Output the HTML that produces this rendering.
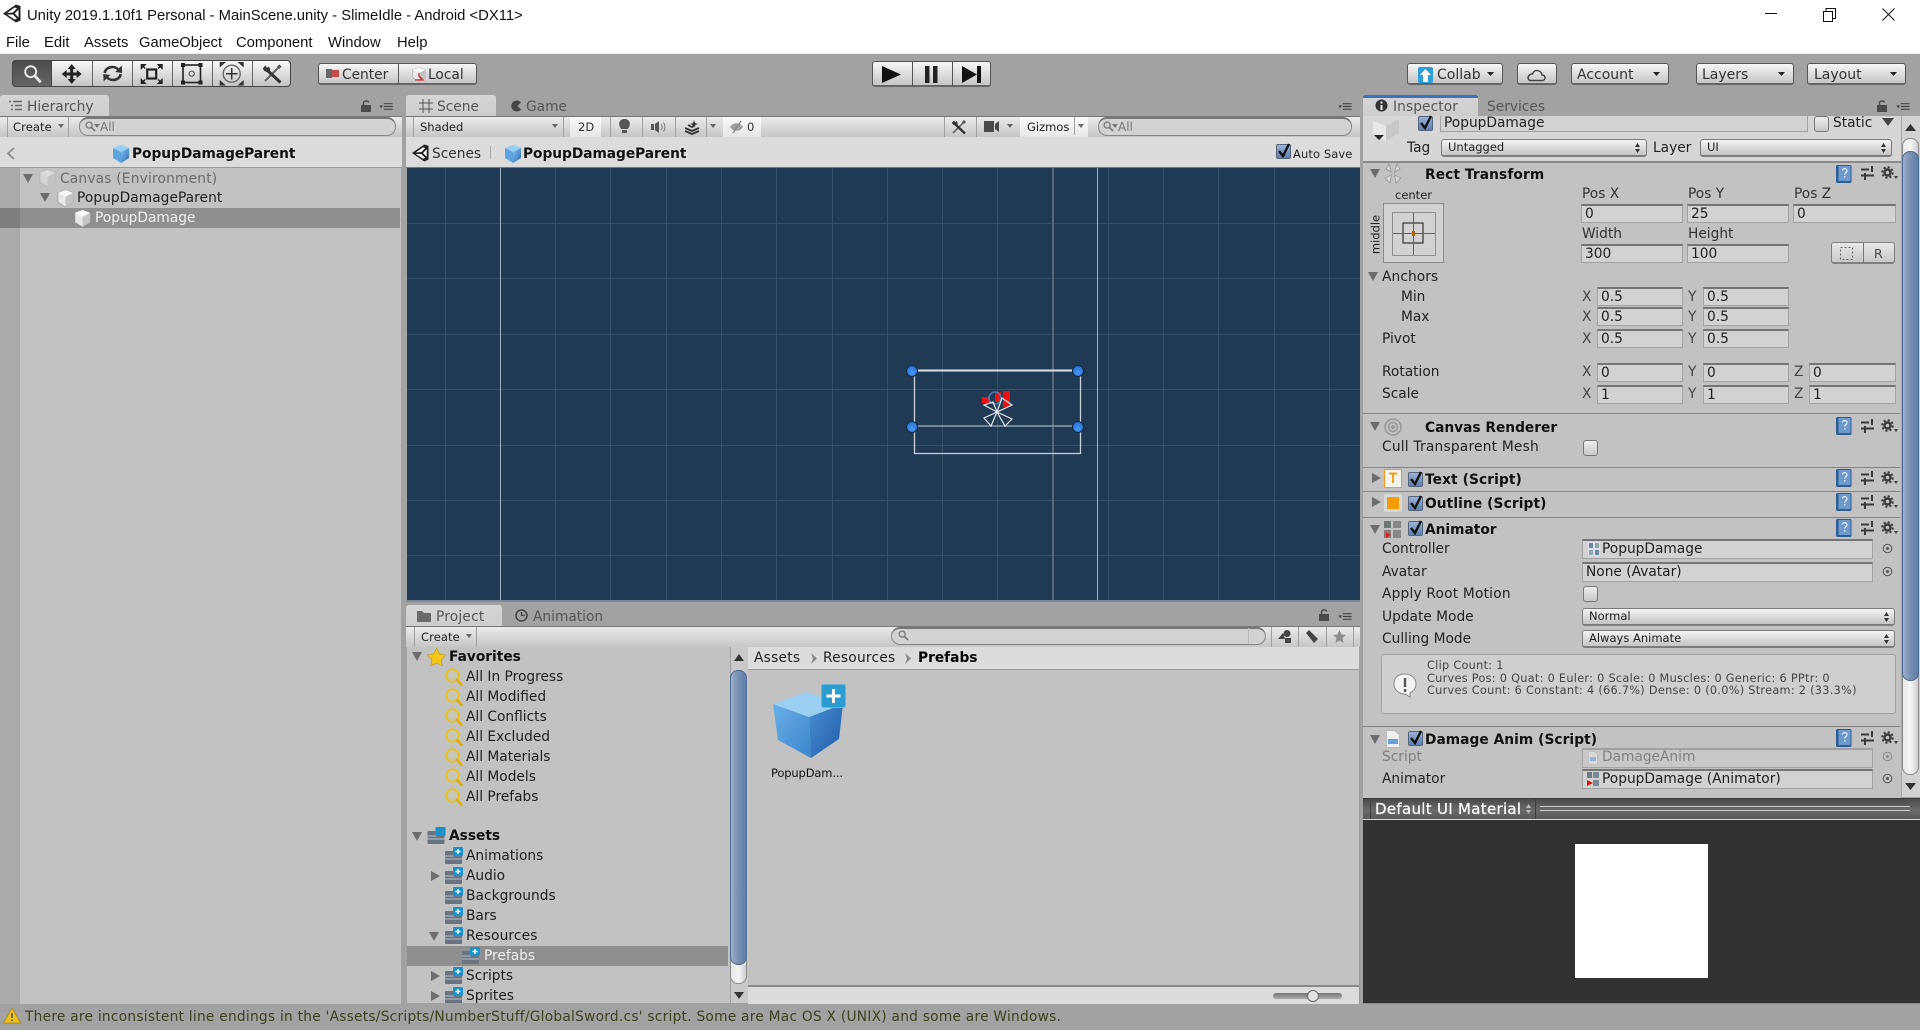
<!DOCTYPE html>
<html><head><meta charset="utf-8"><title>Unity</title>
<style>
html,body{margin:0;padding:0;width:1920px;height:1030px;overflow:hidden;background:#a2a2a2}
#r{position:relative;width:1920px;height:1030px;overflow:hidden;font:13.75px "DejaVu Sans",sans-serif;color:#1e1e1e}
#r div,#r span,#r svg{position:absolute}
.t{white-space:nowrap;height:20px;line-height:20px;padding-top:1px}
.b{font-weight:bold;color:#111}
.s{font-size:11.5px}
.g{color:#555}
.w{font-family:"Liberation Sans",sans-serif;font-size:14.8px;color:#111}
.bar{background:linear-gradient(#ebebeb,#c6c6c6);border-top:1px solid #777;box-sizing:border-box}
.crumb{background:#dcdcdc;border-bottom:1px solid #9a9a9a;box-sizing:border-box}
.list{background:#c2c2c2}
.sep{width:1px;background:#a0a0a0}
.f{box-sizing:border-box;background:#d2d2d2;border:1px solid #a2a2a2;border-top:2px solid #757575;padding-left:3px;line-height:17px;white-space:nowrap;overflow:hidden}
.dd{box-sizing:border-box;background:linear-gradient(#f4f4f4,#c4c4c4);border:1px solid #7c7c7c;border-bottom:2px solid #7c7c7c;border-radius:3px;font-size:11.5px;line-height:14px;padding-left:6px;white-space:nowrap}
.btn{box-sizing:border-box;background:linear-gradient(#f6f6f6,#c6c6c6);border:1px solid #555;border-bottom:2px solid #666;border-radius:3px;line-height:18px;white-space:nowrap;color:#222}
.ln{height:1px;background:#828282;left:1363px;width:537px}
.thumb{box-sizing:border-box;background:linear-gradient(90deg,#9db0ca,#7c93b4 40%,#5f7ea8);border:1px solid #4d6b94;border-radius:8px}
.tail{box-sizing:border-box;background:linear-gradient(90deg,#e8e8e8,#f6f6f6,#cfcfcf);border:1px solid #8a8a8a;border-radius:8px}
.cb{box-sizing:border-box;background:linear-gradient(#eee,#c8c8c8);border:1px solid #777;border-radius:3px;width:15px;height:16px}
.ck{box-sizing:border-box;width:15px;height:15px;background:linear-gradient(#9bb3d4,#5e7fb0);border:1px solid #54657e;border-radius:2px}
</style></head><body><div id="r">
<svg width="0" height="0" style="left:0;top:0">
<defs>
<symbol id="un" viewBox="0 0 18 19"><path d="M0 9.500 13 .5 17.500 2V16.500L13 18.500Z" fill="#222"/><path d="M4 9 11.500 3.500 14 4.200 10 8.500ZM4 10.500H10L14 14.800 11.500 15.500ZM15.500 5.500V13.500L11.700 9.500Z" fill="#fff"/></symbol>
<symbol id="td" viewBox="0 0 10 10"><path d="M0 1H10L5 10Z" fill="#6d6d6d"/></symbol>
<symbol id="tr" viewBox="0 0 10 10"><path d="M1 0V10L10 5Z" fill="#6d6d6d"/></symbol>
<symbol id="cw" viewBox="0 0 18 20"><path d="M9 1 17 4V14L9 19 1 14V4Z" fill="#e8e8e8" stroke="#9a9a9a" stroke-width=".7"/><path d="M9 8V19L17 14V4Z" fill="#c4c4c4"/><path d="M1 4 9 8 17 4 9 1Z" fill="#f8f8f8"/></symbol>
<linearGradient id="bl" x1="0" y1="0" x2="1" y2="1"><stop offset="0" stop-color="#84c0ee"/><stop offset="1" stop-color="#2f6cb4"/></linearGradient>
<symbol id="cb" viewBox="0 0 18 20"><path d="M9 1 17 4V14L9 19 1 14V4Z" fill="#5fa4e0"/><path d="M9 8V19L17 14V4Z" fill="url(#bl)"/><path d="M1 4 9 8 17 4 9 1Z" fill="#9ad0f4"/></symbol>
<symbol id="mg" viewBox="0 0 18 19"><circle cx="7.500" cy="7.500" r="6.200" fill="#d4cfa8" fill-opacity=".35" stroke="#e8c21a" stroke-width="1.800"/><path d="M12 12 16.500 17" stroke="#dcb010" stroke-width="2.600" stroke-linecap="round"/></symbol>
<symbol id="fo" viewBox="0 0 18 18"><rect x="0" y="4" width="17" height="13" rx="1" fill="#6a7480"/><path d="M0 9H9M0 12H17" stroke="#b8c0c8" stroke-width="1"/><rect x="8" y="0" width="10" height="9" rx="1" fill="#1e90c8"/><path d="M13 2V7M10.500 4.500H15.500" stroke="#fff" stroke-width="1.400"/></symbol>
<symbol id="hp" viewBox="0 0 16 18"><rect x="0" y="0" width="15.500" height="18" rx="1.500" fill="#2f5e94"/><rect x="2.500" y="1" width="12" height="15" fill="#6d9acb"/><path d="M6.500 5.500C6.500 3 11 3 11 5.700 11 7.600 8.800 7.600 8.800 9.600M8.800 11V12.600" fill="none" stroke="#e8f0fa" stroke-width="1.200"/></symbol>
<symbol id="sl" viewBox="0 0 13 14"><path d="M0 3.500H8M0 9.500H13M11 0V6M4 7V14" stroke="#3a3a3a" stroke-width="2" fill="none"/></symbol>
<symbol id="ge" viewBox="0 0 17 14"><circle cx="6.500" cy="6.500" r="3" fill="none" stroke="#3a3a3a" stroke-width="2.400"/><circle cx="6.500" cy="6.500" r="5.300" fill="none" stroke="#3a3a3a" stroke-width="2" stroke-dasharray="2.100 2.060"/><path d="M13 10H17L15 13Z" fill="#3a3a3a"/></symbol>
<symbol id="rk" viewBox="0 0 12 8"><path d="M4 1.500H12M4 4H12M4 6.500H12" stroke="#444" stroke-width="1.100"/><path d="M0 3H3.400L1.700 5.500Z" fill="#444"/></symbol>
<symbol id="lk" viewBox="0 0 10 12"><rect y="5" width="10" height="7" fill="#4a4a4a"/><path d="M2.500 5V2.500C2.500 .5 7.500 .5 7.500 2.500" fill="none" stroke="#4a4a4a" stroke-width="1.400"/></symbol>
<symbol id="sr" viewBox="0 0 12 12"><circle cx="4.500" cy="4.500" r="3.300" fill="none" stroke="#777" stroke-width="1.400"/><path d="M7 7 11 11" stroke="#777" stroke-width="1.800"/></symbol>
<symbol id="dt" viewBox="0 0 11 11"><circle cx="5.500" cy="5.500" r="4.300" fill="none" stroke="#555" stroke-width="1"/><circle cx="5.500" cy="5.500" r="1.500" fill="#555"/></symbol>
<symbol id="ud" viewBox="0 0 5 10"><path d="M2.500 0 5 4H0ZM2.500 10 5 6H0Z" fill="#333"/></symbol>
</defs></svg>

<!-- title -->
<div style="left:0;top:0;width:1920px;height:53px;background:#fff"></div>
<div style="left:0;top:53px;width:1920px;height:1px;background:#f0f0f0"></div>
<svg style="left:3px;top:4px" width="18" height="19"><use href="#un"/></svg>
<div class="t w" style="left:27px;top:5px">Unity 2019.1.10f1 Personal - MainScene.unity - SlimeIdle - Android &lt;DX11&gt;</div>
<div class="t w" style="left:6px;top:32px">File</div>
<div class="t w" style="left:44px;top:32px">Edit</div>
<div class="t w" style="left:84px;top:32px">Assets</div>
<div class="t w" style="left:139px;top:32px">GameObject</div>
<div class="t w" style="left:236px;top:32px">Component</div>
<div class="t w" style="left:328px;top:32px">Window</div>
<div class="t w" style="left:397px;top:32px">Help</div>
<svg style="left:1760px;top:4px" width="140" height="20"><path d="M5 9.500H17" stroke="#111"/><path d="M63.500 7.500H72.500V17.500H63.500ZM66 7.500V4.500H75.500V14.500H72.500" fill="none" stroke="#111"/><path d="M122.500 4.500 134.500 16.500M134.500 4.500 122.500 16.500" stroke="#111"/></svg>

<!-- tools -->
<div style="left:12px;top:60px;width:279px;height:27px;box-sizing:border-box;background:linear-gradient(#f8f8f8,#c4c4c4);border:1px solid #444;border-radius:4px"></div>
<div style="left:12px;top:60px;width:40px;height:27px;box-sizing:border-box;background:linear-gradient(#4c4c4c,#656565);border:1px solid #444;border-radius:4px 0 0 4px"></div>
<div class="sep" style="left:92px;top:61px;height:25px;background:#666"></div><div class="sep" style="left:132px;top:61px;height:25px;background:#666"></div><div class="sep" style="left:172px;top:61px;height:25px;background:#666"></div><div class="sep" style="left:212px;top:61px;height:25px;background:#666"></div><div class="sep" style="left:252px;top:61px;height:25px;background:#666"></div>
<svg style="left:12px;top:60px" width="279" height="27" viewBox="0 0 279 27">
<circle cx="18.700" cy="11.700" r="5.500" fill="none" stroke="#e6e6e6" stroke-width="2"/><path d="M22.700 15.700 28.700 22.300" stroke="#e6e6e6" stroke-width="2.800"/>
<path transform="translate(59.700 14)" d="M0 -10 4 -5H1.500V-1.500H5V-4L10 0 5 4V1.500H1.500V5H4L0 10-4 5H-1.500V1.500H-5V4L-10 0-5 -4V-1.500H-1.500V-5H-4Z" fill="#222"/>
<g transform="translate(100.700 13.500)" fill="#333"><path d="M-8 -.5C-7 -7 2 -8.500 6 -3.500" fill="none" stroke="#333" stroke-width="2.600"/><path d="M9 -8 9.500 -.5 2.500 -1.500Z"/><g transform="rotate(180)"><path d="M-8 -.5C-7 -7 2 -8.500 6 -3.500" fill="none" stroke="#333" stroke-width="2.600"/><path d="M9 -8 9.500 -.5 2.500 -1.500Z"/></g></g>
<g transform="translate(139.700 14)" fill="#222"><rect x="-4.500" y="-4.500" width="9" height="9" fill="none" stroke="#222" stroke-width="2.200"/><path d="M-11 -10H-5L-11 -4ZM11 -10H5L11 -4ZM-11 10H-5L-11 4ZM11 10H5L11 4Z"/><path d="M-9 -8-6.500 -5.500M9 -8 6.500 -5.500M-9 8-6.500 5.500M9 8 6.500 5.500" stroke="#222" stroke-width="1.300"/></g>
<rect x="171" y="5" width="17.500" height="17.500" fill="none" stroke="#222" stroke-width="1.600"/><circle cx="179.700" cy="13.700" r="2.600" fill="none" stroke="#444"/><rect x="169" y="3" width="4" height="4" fill="#222"/><rect x="186.500" y="3" width="4" height="4" fill="#222"/><rect x="169" y="20.500" width="4" height="4" fill="#222"/><rect x="186.500" y="20.500" width="4" height="4" fill="#222"/>
<circle cx="219.700" cy="13.700" r="8.500" fill="none" stroke="#666" stroke-width="1.400"/><path d="M219.700 8V19.500M214 13.700H225.500" stroke="#333" stroke-width="1.500"/><path d="M207.700 2H214L207.700 7.500ZM231.700 2H225.500L231.700 7.500ZM207.700 25.500H214L207.700 20ZM231.700 25.500H225.500L231.700 20Z" fill="#333"/>
<path d="M253 21 266 8" stroke="#666" stroke-width="2"/><path d="M266 8 268.500 5.500" stroke="#555" stroke-width="3.200"/><path d="M255.500 10.500 268.500 22.500" stroke="#333" stroke-width="3"/><path d="M251 8 253.500 5.500 255 8 256.500 6.500C258.500 8 258.500 11 256.500 12.500L253.500 11.500C252 11 251 9.500 251 8Z" fill="#333"/>
</svg>

<div class="btn" style="left:318px;top:63px;width:159px;height:22px"></div>
<div class="sep" style="left:398px;top:64px;height:20px;background:#555"></div>
<svg style="left:326px;top:69px" width="14" height="9"><rect width="6" height="9" fill="#666"/><rect x="6" y="1" width="7" height="7" fill="#c24a4a"/></svg>
<div class="t" style="left:342px;top:64px;color:#333">Center</div>
<svg style="left:412px;top:66px" width="14" height="17" viewBox="0 0 18 20"><use href="#cw" width="18" height="20"/><path d="M4 17H14L9 12V8" stroke="#c33" stroke-width="1.800" fill="none"/></svg>
<div class="t" style="left:428px;top:64px;color:#333">Local</div>

<!-- play -->
<div class="btn" style="left:872px;top:61px;width:119px;height:26px"></div>
<div class="sep" style="left:912px;top:62px;height:24px;background:#555"></div><div class="sep" style="left:952px;top:62px;height:24px;background:#555"></div>
<svg style="left:872px;top:61px" width="119" height="26"><path d="M10 5 29 13.500 10 22Z" fill="#111"/><rect x="53" y="5" width="4.500" height="17" fill="#222"/><rect x="61" y="5" width="4.500" height="17" fill="#222"/><path d="M90 5 105 13.500 90 22Z" fill="#111"/><rect x="105" y="5" width="4" height="17" fill="#111"/></svg>

<!-- right toolbar -->
<div class="btn" style="left:1407px;top:63px;width:96px;height:22px"></div>
<svg style="left:1418px;top:67px" width="15" height="16"><rect width="15" height="16" rx="2" fill="#2c9fd8"/><path d="M7.500 2 13 8H10V15H5V8H2Z" fill="#fff"/></svg>
<div class="t" style="left:1437px;top:64px;font-size:14px;color:#333">Collab</div>
<svg style="left:1487px;top:72px" width="8" height="5"><path d="M0 0H7L3.500 4Z" fill="#222"/></svg>
<div class="btn" style="left:1517px;top:63px;width:40px;height:22px"></div>
<svg style="left:1526px;top:68px" width="21" height="14"><path d="M5 12.500H16C20 12.500 20 7 16 7 15 1.500 8 1 6.500 6 2 5.500 0 12.500 5 12.500Z" fill="none" stroke="#444" stroke-width="1.500"/></svg>
<div class="btn" style="left:1571px;top:63px;width:98px;height:22px"></div>
<div class="t" style="left:1577px;top:64px;font-size:14px;color:#333">Account</div>
<svg style="left:1653px;top:72px" width="8" height="5"><path d="M0 0H7L3.500 4Z" fill="#222"/></svg>
<div class="btn" style="left:1696px;top:63px;width:98px;height:22px"></div>
<div class="t" style="left:1702px;top:64px;font-size:14px;color:#333">Layers</div>
<svg style="left:1778px;top:72px" width="8" height="5"><path d="M0 0H7L3.500 4Z" fill="#222"/></svg>
<div class="btn" style="left:1807px;top:63px;width:99px;height:22px"></div>
<div class="t" style="left:1814px;top:64px;font-size:14px;color:#333">Layout</div>
<svg style="left:1890px;top:72px" width="8" height="5"><path d="M0 0H7L3.500 4Z" fill="#222"/></svg>

<!-- HIERARCHY -->
<div style="left:0;top:95px;width:109px;height:21px;background:linear-gradient(#d6d6d6,#cdcdcd);border-radius:3px 3px 0 0"></div>
<svg style="left:9px;top:100px" width="14" height="11"><path d="M0 1.500H2M4 1.500H13M2 5.500H4M6 5.500H13M2 9.500H4M6 9.500H13" stroke="#666" stroke-width="1.500"/></svg>
<div class="t g" style="left:27px;top:96px">Hierarchy</div>
<svg style="left:361px;top:100px" width="10" height="12"><use href="#lk"/></svg>
<svg style="left:377px;top:102px" width="18" height="9" viewBox="0 0 12 8"><use href="#rk" width="12" height="8"/></svg>
<div class="bar" style="left:0;top:116px;width:402px;height:21px"></div>
<div class="sep" style="left:7px;top:117px;height:20px"></div><div class="sep" style="left:68px;top:117px;height:20px"></div>
<div class="t s" style="left:13px;top:116px;color:#222;letter-spacing:.1px">Create</div>
<svg style="left:58px;top:124px" width="7" height="5"><path d="M0 0H6L3 4Z" fill="#666"/></svg>
<div style="left:79px;top:117px;width:317px;height:19px;box-sizing:border-box;background:#d2d2d2;border:1px solid #868686;border-top:2px solid #777;border-radius:9px"></div>
<svg style="left:85px;top:121px" width="11" height="11"><use href="#sr"/></svg>
<svg style="left:94px;top:124px" width="6" height="4"><path d="M0 0H6L3 4Z" fill="#777"/></svg>
<div class="t s g" style="left:100px;top:116px;font-size:12px;color:#777">All</div>
<div class="crumb" style="left:0;top:137px;width:402px;height:31px"></div>
<svg style="left:6px;top:147px" width="9" height="13"><path d="M8 1 2 6.500 8 12" fill="none" stroke="#8a8a8a" stroke-width="1.800"/></svg>
<svg style="left:112px;top:144px" width="18" height="20"><use href="#cb"/></svg>
<div class="t b" style="left:132px;top:143px;letter-spacing:-.03px">PopupDamageParent</div>
<div class="list" style="left:0;top:168px;width:401px;height:836px"></div>
<div style="left:0;top:168px;width:20px;height:836px;background:#ababab"></div>
<div style="left:0;top:208px;width:400px;height:20px;background:#8f8f8f"></div>
<div style="left:0;top:208px;width:20px;height:20px;background:#7e7e7e"></div>
<svg style="left:23px;top:173px" width="10" height="10"><use href="#td"/></svg>
<svg style="left:39px;top:169px;opacity:.5" width="17" height="19"><use href="#cw"/></svg>
<div class="t" style="left:60px;top:168px;color:#6a6a6a;letter-spacing:.2px">Canvas (Environment)</div>
<svg style="left:40px;top:192px" width="10" height="10"><use href="#td"/></svg>
<svg style="left:57px;top:189px" width="17" height="19"><use href="#cw"/></svg>
<div class="t" style="left:77px;top:187px;letter-spacing:.05px">PopupDamageParent</div>
<svg style="left:74px;top:209px" width="17" height="19"><use href="#cw"/></svg>
<div class="t" style="left:95px;top:207px;color:#f0f0f0">PopupDamage</div>

<!-- SCENE -->
<div style="left:406px;top:95px;width:90px;height:21px;background:linear-gradient(#d6d6d6,#cdcdcd);border-radius:3px 3px 0 0"></div>
<svg style="left:419px;top:99px" width="14" height="14"><path d="M4 0V14M10 0V14M0 4H14M0 10H14" stroke="#555"/></svg>
<div class="t g" style="left:437px;top:96px">Scene</div>
<svg style="left:510px;top:100px" width="12" height="12"><path d="M11 2.500A5.500 5.500 0 1 0 11 9.500L7.500 6Z" fill="#444"/></svg>
<div class="t g" style="left:526px;top:96px">Game</div>
<svg style="left:1336px;top:102px" width="18" height="9" viewBox="0 0 12 8"><use href="#rk" width="12" height="8"/></svg>
<div class="bar" style="left:406px;top:116px;width:954px;height:21px"></div>
<div class="sep" style="left:413px;top:117px;height:20px"></div><div class="sep" style="left:563px;top:117px;height:20px"></div>
<div class="t s" style="left:420px;top:116px;color:#222">Shaded</div>
<svg style="left:552px;top:124px" width="7" height="5"><path d="M0 0H6L3 4Z" fill="#666"/></svg>
<div style="left:570px;top:117px;width:31px;height:20px;background:linear-gradient(#fafafa,#e6e6e6)"></div>
<div class="t s" style="left:578px;top:116px;color:#333">2D</div>
<div class="sep" style="left:610px;top:117px;height:20px"></div><div class="sep" style="left:642px;top:117px;height:20px"></div><div class="sep" style="left:675px;top:117px;height:20px"></div><div class="sep" style="left:706px;top:117px;height:20px"></div>
<svg style="left:619px;top:119px" width="11" height="16"><path d="M5.500 0C-1 0-1 7 2.500 10H8.500C12 7 12 0 5.500 0Z" fill="#555"/><rect x="3" y="11" width="5" height="3" fill="#555"/></svg>
<svg style="left:651px;top:121px" width="15" height="12"><rect y="3" width="3" height="6" fill="#555"/><path d="M4 3 8 0V12L4 9Z" fill="#555"/><path d="M10 3C11.500 5 11.500 7 10 9M12.500 1.500C14.500 4.500 14.500 7.500 12.500 10.500" fill="none" stroke="#777"/></svg>
<svg style="left:685px;top:120px" width="15" height="15"><path d="M0 8 7 11 14 8M0 11 7 14 14 11M3 5 7 7 10 5" fill="none" stroke="#333" stroke-width="1.800"/><path d="M9 0 10 3 13 4 10 5 9 8 8 5 5 4 8 3Z" fill="#333"/></svg>
<svg style="left:710px;top:124px" width="7" height="5"><path d="M0 0H6L3 4Z" fill="#666"/></svg>
<div style="left:723px;top:117px;width:38px;height:20px;background:linear-gradient(#fafafa,#e6e6e6)"></div>
<svg style="left:729px;top:120px" width="16" height="14"><path d="M1 7C4 2 11 2 14 7 11 12 4 12 1 7Z" fill="#a0a0a0"/><path d="M4 13 12 1" stroke="#888" stroke-width="1.400"/></svg>
<div class="t s" style="left:747px;top:116px;color:#333">0</div>
<div class="sep" style="left:944px;top:117px;height:20px"></div><div class="sep" style="left:976px;top:117px;height:20px"></div>
<svg style="left:951px;top:119px" width="16" height="16"><path d="M2 14 12 4" stroke="#666" stroke-width="1.600"/><path d="M12 4 14 2" stroke="#555" stroke-width="2.800"/><path d="M4 5 14 14.500" stroke="#333" stroke-width="2.400"/><path d="M1 3.500 3 1.500 4.200 3.300 5.500 2C7 3.300 7 5.500 5.500 6.800L3 6C1.800 5.600 1 4.500 1 3.500Z" fill="#333"/></svg>
<svg style="left:984px;top:121px" width="15" height="11"><rect width="10" height="11" fill="#4a4a4a"/><path d="M11 3 15 0V11L11 8Z" fill="#4a4a4a"/></svg>
<svg style="left:1007px;top:124px" width="7" height="5"><path d="M0 0H6L3 4Z" fill="#666"/></svg>
<div style="left:1020px;top:117px;width:68px;height:20px;background:linear-gradient(#fafafa,#e8e8e8)"></div>
<div class="sep" style="left:1074px;top:117px;height:18px"></div>
<div class="t s" style="left:1027px;top:116px;color:#222">Gizmos</div>
<svg style="left:1078px;top:124px" width="7" height="5"><path d="M0 0H6L3 4Z" fill="#666"/></svg>
<div style="left:1098px;top:117px;width:254px;height:19px;box-sizing:border-box;background:#d2d2d2;border:1px solid #868686;border-top:2px solid #777;border-radius:9px"></div>
<svg style="left:1103px;top:121px" width="11" height="11"><use href="#sr"/></svg>
<svg style="left:1112px;top:124px" width="6" height="4"><path d="M0 0H6L3 4Z" fill="#777"/></svg>
<div class="t s" style="left:1118px;top:116px;font-size:12px;color:#777">All</div>
<div class="crumb" style="left:406px;top:137px;width:954px;height:31px;border-bottom-color:#777"></div>
<svg style="left:412px;top:144px" width="17" height="18"><use href="#un" width="17" height="18"/></svg>
<div class="t" style="left:432px;top:143px;color:#333">Scenes</div>
<div style="left:490px;top:146px;width:1px;height:13px;background:#aaa"></div>
<svg style="left:504px;top:144px" width="18" height="20"><use href="#cb"/></svg>
<div class="t b" style="left:523px;top:143px;font-weight:bold;color:#111;letter-spacing:-.03px">PopupDamageParent</div>
<div class="ck" style="left:1276px;top:144px"></div>
<svg style="left:1277px;top:142px" width="14" height="16"><path d="M2 9 6 14 12 2" fill="none" stroke="#111" stroke-width="2.400"/></svg>
<div class="t s" style="left:1293px;top:143px;color:#222;letter-spacing:.1px">Auto Save</div>

<svg style="left:407px;top:168px" width="953" height="432" viewBox="407 168 953 432">
<rect x="407" y="168" width="953" height="432" fill="#213a54"/>
<path d="M445.500 168V600M555.500 168V600M610.500 168V600M666.500 168V600M721.500 168V600M776.500 168V600M832.500 168V600M887.500 168V600M942.500 168V600M997.500 168V600M1108.500 168V600M1163.500 168V600M1218.500 168V600M1274.500 168V600M1329.500 168V600M407 223.500H1360M407 278.500H1360M407 334.500H1360M407 389.500H1360M407 445.500H1360M407 500.500H1360M407 555.500H1360" stroke="#384f68" stroke-width="1"/>
<path d="M1053 168V600" stroke="#59697b" stroke-width="2"/>
<path d="M500.500 168V600M1097.500 168V600" stroke="#9fb0c0"/>
<path d="M914.500 371V453.500H1080.500V371" fill="none" stroke="#c9d2da" stroke-width="1.300"/>
<path d="M912 370.500H1078" stroke="#d8e0e8" stroke-width="2"/>
<path d="M912 426H1078" stroke="#8e9fb0" stroke-width="1.500"/>
<path d="M982 397H990V403H982ZM995 392H1001V402H995ZM1003 391H1010V407H1003Z" fill="#ee1111"/>
<circle cx="995" cy="398" r="6" fill="none" stroke="#4d7ab0" stroke-width="1.500"/>
<path d="M997 412 1002 398 1012 405ZM997 412 984 405 993 402ZM997 412 984 418 991 426ZM997 412 1012 419 1005 426Z" fill="none" stroke="#e0e6ec" stroke-width="1.200"/>
<defs><radialGradient id="h" cx=".5" cy=".65" r=".7"><stop offset="0" stop-color="#4a9cf5"/><stop offset="1" stop-color="#1f66d0"/></radialGradient></defs>
<g fill="url(#h)" stroke="#142a40" stroke-width="1"><circle cx="912" cy="371" r="5.500"/><circle cx="1078" cy="371" r="5.500"/><circle cx="912" cy="427" r="5.500"/><circle cx="1078" cy="427" r="5.500"/></g>
</svg>
<div style="left:406px;top:600px;width:954px;height:2px;background:#7b8897"></div>

<!-- PROJECT -->
<div style="left:406px;top:605px;width:96px;height:21px;background:linear-gradient(#d6d6d6,#cdcdcd);border-radius:3px 3px 0 0"></div>
<svg style="left:417px;top:610px" width="15" height="12"><path d="M0 1H5L7 3H14V12H0Z" fill="#6a6a6a"/></svg>
<div class="t g" style="left:436px;top:606px;letter-spacing:.2px">Project</div>
<svg style="left:515px;top:609px" width="13" height="13"><circle cx="6.500" cy="6.500" r="5.500" fill="none" stroke="#444" stroke-width="1.500"/><path d="M6.500 3V6.500H10" fill="none" stroke="#444" stroke-width="1.300"/></svg>
<div class="t g" style="left:533px;top:606px">Animation</div>
<svg style="left:1319px;top:609px" width="10" height="12"><use href="#lk"/></svg>
<svg style="left:1336px;top:612px" width="18" height="9" viewBox="0 0 12 8"><use href="#rk" width="12" height="8"/></svg>
<div class="bar" style="left:406px;top:626px;width:954px;height:21px"></div>
<div class="sep" style="left:414px;top:627px;height:20px"></div><div class="sep" style="left:476px;top:627px;height:20px"></div>
<div class="t s" style="left:421px;top:626px;color:#222;letter-spacing:.1px">Create</div>
<svg style="left:466px;top:634px" width="7" height="5"><path d="M0 0H6L3 4Z" fill="#666"/></svg>
<div style="left:891px;top:627px;width:375px;height:18px;box-sizing:border-box;background:#d2d2d2;border:1px solid #868686;border-top:2px solid #777;border-radius:9px"></div>
<div style="left:1248px;top:628px;width:1px;height:16px;background:#bbb"></div>
<svg style="left:898px;top:630px" width="11" height="11"><use href="#sr"/></svg>
<div class="sep" style="left:1271px;top:627px;height:20px"></div><div class="sep" style="left:1298px;top:627px;height:20px"></div><div class="sep" style="left:1326px;top:627px;height:20px"></div><div class="sep" style="left:1353px;top:627px;height:20px"></div>
<svg style="left:1278px;top:630px" width="14" height="13"><path d="M0 9 5 3 7 9Z" fill="#444"/><circle cx="9" cy="3.500" r="3.500" fill="#444"/><rect x="7" y="8" width="6" height="5" fill="#444"/></svg>
<svg style="left:1305px;top:630px" width="14" height="14"><path d="M1 3 4 0 13 9 9 13Z" fill="#444"/></svg>
<svg style="left:1333px;top:630px" width="13" height="13"><path d="M6.500 0 8.500 4.500 13 5 9.500 8 10.500 13 6.500 10.500 2.500 13 3.500 8 0 5 4.500 4.500Z" fill="#8d8d8d"/></svg>

<div class="list" style="left:407px;top:647px;width:323px;height:356px"></div>
<div style="left:407px;top:946px;width:321px;height:20px;background:#8f8f8f"></div>
<svg style="left:412px;top:651px" width="10" height="10"><use href="#td"/></svg>
<svg style="left:427px;top:648px" width="19" height="18"><path d="M9.500 0 12.500 6 19 7 14 11.500 15.500 18 9.500 15 3.500 18 5 11.500 0 7 6.500 6Z" fill="#f4c61c" stroke="#b99420" stroke-width=".6"/></svg>
<div class="t b" style="left:449px;top:646px;color:#111">Favorites</div>
<svg style="left:445px;top:668px" width="18" height="19"><use href="#mg"/></svg><div class="t" style="left:466px;top:666px">All In Progress</div>
<svg style="left:445px;top:688px" width="18" height="19"><use href="#mg"/></svg><div class="t" style="left:466px;top:686px">All Modified</div>
<svg style="left:445px;top:708px" width="18" height="19"><use href="#mg"/></svg><div class="t" style="left:466px;top:706px">All Conflicts</div>
<svg style="left:445px;top:728px" width="18" height="19"><use href="#mg"/></svg><div class="t" style="left:466px;top:726px">All Excluded</div>
<svg style="left:445px;top:748px" width="18" height="19"><use href="#mg"/></svg><div class="t" style="left:466px;top:746px">All Materials</div>
<svg style="left:445px;top:768px" width="18" height="19"><use href="#mg"/></svg><div class="t" style="left:466px;top:766px">All Models</div>
<svg style="left:445px;top:788px" width="18" height="19"><use href="#mg"/></svg><div class="t" style="left:466px;top:786px">All Prefabs</div>
<svg style="left:412px;top:831px" width="10" height="10"><use href="#td"/></svg>
<svg style="left:427px;top:827px" width="19" height="18" viewBox="0 0 18 18"><rect y="4" width="17" height="13" rx="1" fill="#6a7480"/><path d="M0 9H9M0 12H17" stroke="#b8c0c8"/><rect x="8" width="10" height="9" rx="1" fill="#1e90c8"/></svg>
<div class="t b" style="left:449px;top:825px;color:#111">Assets</div>
<svg style="left:445px;top:847px" width="18" height="18"><use href="#fo"/></svg><div class="t" style="left:466px;top:845px">Animations</div>
<svg style="left:430px;top:871px" width="10" height="10"><use href="#tr"/></svg>
<svg style="left:445px;top:867px" width="18" height="18"><use href="#fo"/></svg><div class="t" style="left:466px;top:865px">Audio</div>
<svg style="left:445px;top:887px" width="18" height="18"><use href="#fo"/></svg><div class="t" style="left:466px;top:885px;letter-spacing:.05px">Backgrounds</div>
<svg style="left:445px;top:907px" width="18" height="18"><use href="#fo"/></svg><div class="t" style="left:466px;top:905px">Bars</div>
<svg style="left:429px;top:931px" width="10" height="10"><use href="#td"/></svg>
<svg style="left:445px;top:927px" width="18" height="18"><use href="#fo"/></svg><div class="t" style="left:466px;top:925px;letter-spacing:.15px">Resources</div>
<svg style="left:462px;top:947px" width="18" height="18"><use href="#fo"/></svg><div class="t" style="left:484px;top:945px;color:#f0f0f0">Prefabs</div>
<svg style="left:430px;top:971px" width="10" height="10"><use href="#tr"/></svg>
<svg style="left:445px;top:967px" width="18" height="18"><use href="#fo"/></svg><div class="t" style="left:466px;top:965px">Scripts</div>
<svg style="left:430px;top:991px" width="10" height="10"><use href="#tr"/></svg>
<svg style="left:445px;top:987px" width="18" height="16" viewBox="0 0 18 16"><use href="#fo" width="18" height="18"/></svg><div class="t" style="left:466px;top:985px;height:17px;line-height:20px;overflow:hidden">Sprites</div>
<div style="left:730px;top:647px;width:18px;height:356px;background:#c9c9c9;border-left:1px solid #a0a0a0;box-sizing:border-box"></div>
<svg style="left:734px;top:654px" width="10" height="8"><path d="M5 0 10 7H0Z" fill="#333"/></svg>
<svg style="left:734px;top:992px" width="10" height="8"><path d="M0 0H10L5 7Z" fill="#333"/></svg>
<div class="tail" style="left:730px;top:670px;width:17px;height:314px"></div>
<div class="thumb" style="left:730px;top:670px;width:17px;height:295px"></div>
<div class="crumb" style="left:748px;top:647px;width:611px;height:23px"></div>
<div class="t" style="left:754px;top:647px;color:#222;letter-spacing:.25px">Assets</div>
<svg style="left:810px;top:653px" width="8" height="11"><path d="M1 0 7 5.500 1 11 3 5.500Z" fill="#8a8a8a"/></svg>
<div class="t" style="left:823px;top:647px;color:#222;letter-spacing:.25px">Resources</div>
<svg style="left:904px;top:653px" width="8" height="11"><path d="M1 0 7 5.500 1 11 3 5.500Z" fill="#8a8a8a"/></svg>
<div class="t b" style="left:918px;top:647px;color:#000">Prefabs</div>
<div class="list" style="left:748px;top:670px;width:611px;height:315px"></div>
<svg style="left:770px;top:680px" width="80" height="82" viewBox="0 0 80 82">
<defs><linearGradient id="c1" x1="0" y1="0" x2="1" y2="1"><stop offset="0" stop-color="#6ab0e6"/><stop offset="1" stop-color="#3c84cc"/></linearGradient><linearGradient id="c2" x1="0" y1="0" x2="1" y2="1"><stop offset="0" stop-color="#4a90d4"/><stop offset="1" stop-color="#1f5aa6"/></linearGradient></defs>
<path d="M3 24 39 37 41 78 8 60Z" fill="url(#c1)"/><path d="M39 37 73 24 69 59 41 78Z" fill="url(#c2)"/><path d="M3 24 36 12 73 24 39 37Z" fill="#9bd0f2"/>
<rect x="51.500" y="4.500" width="24" height="23" rx="2" fill="#2a9cd0" stroke="#6ab6d8"/><path d="M63.500 9V23M56.500 16H70.500" stroke="#fff" stroke-width="3"/></svg>
<div class="t s" style="left:771px;top:762px;color:#111;letter-spacing:-.15px">PopupDam...</div>
<div style="left:748px;top:985px;width:611px;height:19px;background:#dcdcdc;border-top:2px solid #888;box-sizing:border-box"></div>
<div style="left:1273px;top:993px;width:69px;height:6px;background:linear-gradient(#777,#aaa);border-radius:3px"></div>
<div style="left:1307px;top:990px;width:12px;height:12px;box-sizing:border-box;background:#e4e4e4;border:1px solid #666;border-radius:50%"></div>
<div style="left:1359px;top:670px;width:1px;height:334px;background:#999"></div>

<!-- status -->
<svg style="left:3px;top:1007px" width="18" height="17"><path d="M9 1 17.500 16H.5Z" fill="#f0c020" stroke="#a88410" stroke-width=".7"/><path d="M9 6V11M9 12.500V14" stroke="#554" stroke-width="1.600"/></svg>
<div class="t" style="left:25px;top:1006px;color:#3f3f20;letter-spacing:.25px">There are inconsistent line endings in the 'Assets/Scripts/NumberStuff/GlobalSword.cs' script. Some are Mac OS X (UNIX) and some are Windows.</div>

<!-- INSPECTOR -->
<div style="left:1363px;top:95px;width:115px;height:21px;background:linear-gradient(#d6d6d6,#cdcdcd)"></div>
<div style="left:1363px;top:95px;width:115px;height:3px;background:#3c72bb;border-radius:2px 2px 0 0"></div>
<svg style="left:1375px;top:99px" width="13" height="13"><circle cx="6.500" cy="6.500" r="6" fill="#333"/><path d="M6.500 2.500V4.500M6.500 6V11" stroke="#eee" stroke-width="2"/></svg>
<div class="t g" style="left:1393px;top:96px;letter-spacing:.1px">Inspector</div>
<div class="t g" style="left:1487px;top:96px">Services</div>
<svg style="left:1877px;top:100px" width="10" height="12"><use href="#lk"/></svg>
<svg style="left:1894px;top:102px" width="18" height="9" viewBox="0 0 12 8"><use href="#rk" width="12" height="8"/></svg>
<div style="left:1363px;top:116px;width:538px;height:45px;background:#d6d6d6"></div>
<div style="left:1363px;top:161px;width:538px;height:637px;background:#c2c2c2"></div>
<div style="left:1363px;top:161px;width:538px;height:2px;background:#8a8a8a"></div>
<svg style="left:1372px;top:117px" width="28" height="24" viewBox="0 0 28 24"><path d="M1 4 14 9 27 2 27 16 14 24 1 16Z" fill="#e8e8e8"/><path d="M14 9 27 2V16L14 24Z" fill="#c8c8c8"/><path d="M2 18H12L7 23Z" fill="#222"/></svg>
<div class="ck" style="left:1418px;top:116px"></div>
<svg style="left:1419px;top:114px" width="14" height="16"><path d="M2 9 6 14 12 2" fill="none" stroke="#111" stroke-width="2.400"/></svg>
<div class="f" style="left:1440px;top:116px;width:368px;height:16px;border-top:none;background:#d2d2d2;line-height:14px;padding-top:0;color:#222">PopupDamage</div>
<div class="cb" style="left:1814px;top:116px"></div>
<div class="t" style="left:1833px;top:112px;color:#222">Static</div>
<svg style="left:1882px;top:118px" width="12" height="9"><path d="M0 0H12L6 8Z" fill="#444"/></svg>
<div class="t" style="left:1407px;top:137px;color:#222">Tag</div>
<div class="dd" style="left:1441px;top:139px;width:206px;height:18px">Untagged</div>
<svg style="left:1635px;top:143px" width="5" height="10"><use href="#ud"/></svg>
<div class="t" style="left:1653px;top:137px;color:#222">Layer</div>
<div class="dd" style="left:1700px;top:139px;width:192px;height:18px">UI</div>
<svg style="left:1881px;top:143px" width="5" height="10"><use href="#ud"/></svg>

<svg style="left:1370px;top:168px" width="10" height="10"><use href="#td"/></svg>
<svg style="left:1383px;top:163px" width="20" height="21" viewBox="0 0 20 21"><path d="M8.500 9 3 6 6 1ZM11.500 9 17 6 14 1ZM8.500 12 2 15 7 20ZM11.500 12 18 15 13 20Z" fill="#d8d8d8" stroke="#a0a0a0" stroke-width="1"/></svg>
<div class="t b" style="left:1425px;top:164px;color:#111;letter-spacing:.1px">Rect Transform</div>
<svg style="left:1836px;top:165px" width="16" height="18"><use href="#hp"/></svg><svg style="left:1861px;top:166px" width="13" height="14"><use href="#sl"/></svg><svg style="left:1881px;top:166px" width="17" height="14"><use href="#ge"/></svg>
<div class="t s" style="left:1395px;top:184px;color:#222">center</div>
<div style="left:1383px;top:203px;width:61px;height:60px;box-sizing:border-box;background:#d2d2d2;border:1px solid #8a8a8a"></div>
<div class="t s" style="left:1355px;top:224px;width:40px;text-align:center;transform:rotate(-90deg);color:#222">middle</div>
<svg style="left:1392px;top:212px" width="44" height="44"><rect x=".5" y=".5" width="43" height="43" fill="none" stroke="#8f8f8f"/><rect x="11" y="11" width="20" height="20" fill="none" stroke="#333" stroke-width="1.200"/><path d="M21.500 1V43M1 21.500H43" stroke="#cc3333"/><rect x="20" y="19" width="3" height="5" fill="#b06010"/></svg>
<div class="t" style="left:1582px;top:183px;color:#333">Pos X</div><div class="t" style="left:1688px;top:183px;color:#333">Pos Y</div><div class="t" style="left:1794px;top:183px;color:#333">Pos Z</div>
<div class="f" style="left:1581px;top:204px;width:102px;height:19px">0</div><div class="f" style="left:1687px;top:204px;width:102px;height:19px">25</div><div class="f" style="left:1793px;top:204px;width:103px;height:19px">0</div>
<div class="t" style="left:1582px;top:223px;color:#333">Width</div><div class="t" style="left:1688px;top:223px;color:#333">Height</div>
<div class="f" style="left:1581px;top:244px;width:102px;height:19px">300</div><div class="f" style="left:1687px;top:244px;width:102px;height:19px">100</div>
<div class="btn" style="left:1831px;top:242px;width:64px;height:22px;border-color:#808080;background:linear-gradient(#e8e8e8,#c8c8c8)"></div>
<div style="left:1863px;top:243px;width:1px;height:20px;background:#777"></div>
<svg style="left:1840px;top:247px" width="14" height="13"><rect x=".5" y=".5" width="12" height="12" fill="none" stroke="#666" stroke-dasharray="2 2"/></svg>
<div class="t" style="left:1874px;top:243px;font-size:12.500px;color:#444">R</div>
<svg style="left:1368px;top:271px" width="10" height="10"><use href="#td"/></svg>
<div class="t" style="left:1382px;top:266px;color:#222;letter-spacing:.1px">Anchors</div>
<div class="t" style="left:1401px;top:286px;color:#222">Min</div>
<div class="t" style="left:1401px;top:306px;color:#222">Max</div>
<div class="t" style="left:1382px;top:328px;color:#222">Pivot</div>
<div class="t" style="left:1382px;top:361px;color:#222">Rotation</div>
<div class="t" style="left:1382px;top:383px;color:#222">Scale</div>
<div class="t" style="left:1582px;top:286px;color:#444">X</div><div class="t" style="left:1688px;top:286px;color:#444">Y</div>
<div class="f" style="left:1597px;top:287px;width:86px;height:19px">0.5</div><div class="f" style="left:1703px;top:287px;width:86px;height:19px">0.5</div>
<div class="t" style="left:1582px;top:306px;color:#444">X</div><div class="t" style="left:1688px;top:306px;color:#444">Y</div>
<div class="f" style="left:1597px;top:307px;width:86px;height:19px">0.5</div><div class="f" style="left:1703px;top:307px;width:86px;height:19px">0.5</div>
<div class="t" style="left:1582px;top:328px;color:#444">X</div><div class="t" style="left:1688px;top:328px;color:#444">Y</div>
<div class="f" style="left:1597px;top:329px;width:86px;height:19px">0.5</div><div class="f" style="left:1703px;top:329px;width:86px;height:19px">0.5</div>
<div class="t" style="left:1582px;top:361px;color:#444">X</div><div class="t" style="left:1688px;top:361px;color:#444">Y</div><div class="t" style="left:1794px;top:361px;color:#444">Z</div>
<div class="f" style="left:1597px;top:363px;width:86px;height:19px">0</div><div class="f" style="left:1703px;top:363px;width:86px;height:19px">0</div><div class="f" style="left:1809px;top:363px;width:87px;height:19px">0</div>
<div class="t" style="left:1582px;top:383px;color:#444">X</div><div class="t" style="left:1688px;top:383px;color:#444">Y</div><div class="t" style="left:1794px;top:383px;color:#444">Z</div>
<div class="f" style="left:1597px;top:385px;width:86px;height:19px">1</div><div class="f" style="left:1703px;top:385px;width:86px;height:19px">1</div><div class="f" style="left:1809px;top:385px;width:87px;height:19px">1</div>

<div class="ln" style="top:413px"></div>
<svg style="left:1370px;top:421px" width="10" height="10"><use href="#td"/></svg>
<svg style="left:1383px;top:418px" width="20" height="18"><circle cx="10" cy="9" r="8" fill="none" stroke="#999" stroke-width="1.500"/><circle cx="10" cy="9" r="4.500" fill="none" stroke="#999" stroke-width="1.500"/><circle cx="10" cy="9" r="2" fill="#999"/></svg>
<div class="t b" style="left:1425px;top:417px;color:#111">Canvas Renderer</div>
<svg style="left:1836px;top:417px" width="16" height="18"><use href="#hp"/></svg><svg style="left:1861px;top:419px" width="13" height="14"><use href="#sl"/></svg><svg style="left:1881px;top:419px" width="17" height="14"><use href="#ge"/></svg>
<div class="t" style="left:1382px;top:436px;color:#222;letter-spacing:.22px">Cull Transparent Mesh</div>
<div class="cb" style="left:1583px;top:440px"></div>

<div class="ln" style="top:467px"></div>
<svg style="left:1371px;top:473px" width="10" height="10"><use href="#tr"/></svg>
<svg style="left:1384px;top:469px" width="18" height="19"><rect x=".5" y=".5" width="17" height="18" fill="#f4f4ec" stroke="#f09a20"/><path d="M5 4.500H13M9 4.500V14" stroke="#f0a020" stroke-width="2"/></svg>
<div class="ck" style="left:1408px;top:472px"></div><svg style="left:1409px;top:470px" width="14" height="16"><path d="M2 9 6 14 12 2" fill="none" stroke="#111" stroke-width="2.400"/></svg>
<div class="t b" style="left:1425px;top:469px;color:#111;letter-spacing:.1px">Text (Script)</div>
<svg style="left:1836px;top:469px" width="16" height="18"><use href="#hp"/></svg><svg style="left:1861px;top:471px" width="13" height="14"><use href="#sl"/></svg><svg style="left:1881px;top:471px" width="17" height="14"><use href="#ge"/></svg>
<div class="ln" style="top:491px"></div>
<svg style="left:1371px;top:497px" width="10" height="10"><use href="#tr"/></svg>
<svg style="left:1384px;top:494px" width="18" height="18"><rect width="18" height="18" rx="2" fill="#d8d8d8"/><rect x="3" y="3" width="12" height="12" fill="#f59c00"/></svg>
<div class="ck" style="left:1408px;top:496px"></div><svg style="left:1409px;top:494px" width="14" height="16"><path d="M2 9 6 14 12 2" fill="none" stroke="#111" stroke-width="2.400"/></svg>
<div class="t b" style="left:1425px;top:493px;color:#111;letter-spacing:.1px">Outline (Script)</div>
<svg style="left:1836px;top:493px" width="16" height="18"><use href="#hp"/></svg><svg style="left:1861px;top:495px" width="13" height="14"><use href="#sl"/></svg><svg style="left:1881px;top:495px" width="17" height="14"><use href="#ge"/></svg>
<div class="ln" style="top:517px"></div>
<svg style="left:1370px;top:524px" width="10" height="10"><use href="#td"/></svg>
<svg style="left:1384px;top:521px" width="17" height="17"><rect width="7" height="7" fill="#6a7a78"/><rect x="9" width="8" height="7" fill="#888"/><rect x="9" y="9" width="8" height="8" fill="#888"/><rect y="9" width="7" height="8" fill="#8a7a7a"/><path d="M2 11 7 14 2 17Z" fill="#d22"/></svg>
<div class="ck" style="left:1408px;top:521px"></div><svg style="left:1409px;top:519px" width="14" height="16"><path d="M2 9 6 14 12 2" fill="none" stroke="#111" stroke-width="2.400"/></svg>
<div class="t b" style="left:1425px;top:519px;color:#111">Animator</div>
<svg style="left:1836px;top:519px" width="16" height="18"><use href="#hp"/></svg><svg style="left:1861px;top:521px" width="13" height="14"><use href="#sl"/></svg><svg style="left:1881px;top:521px" width="17" height="14"><use href="#ge"/></svg>
<div class="t" style="left:1382px;top:538px;color:#222">Controller</div>
<div class="f" style="left:1582px;top:539px;width:291px;height:20px;padding-left:19px;line-height:16px">PopupDamage</div>
<svg style="left:1588px;top:542px" width="12" height="14"><rect width="12" height="14" fill="#dde"/><rect x="1" y="1" width="4" height="5" fill="#6d8a9c"/><rect x="7" y="1" width="4" height="5" fill="#8aa"/><rect x="1" y="8" width="4" height="5" fill="#8aa"/><rect x="7" y="8" width="4" height="5" fill="#6d8a9c"/></svg>
<svg style="left:1882px;top:543px" width="11" height="11"><use href="#dt"/></svg>
<div class="t" style="left:1382px;top:561px;color:#222">Avatar</div>
<div class="f" style="left:1582px;top:562px;width:291px;height:20px;line-height:16px">None (Avatar)</div>
<svg style="left:1882px;top:566px" width="11" height="11"><use href="#dt"/></svg>
<div class="t" style="left:1382px;top:583px;color:#222;letter-spacing:.2px">Apply Root Motion</div>
<div class="cb" style="left:1583px;top:586px"></div>
<div class="t" style="left:1382px;top:606px;color:#222">Update Mode</div>
<div class="dd" style="left:1582px;top:608px;width:313px;height:18px">Normal</div>
<svg style="left:1884px;top:612px" width="5" height="10"><use href="#ud"/></svg>
<div class="t" style="left:1382px;top:628px;color:#222">Culling Mode</div>
<div class="dd" style="left:1582px;top:630px;width:313px;height:18px">Always Animate</div>
<svg style="left:1884px;top:634px" width="5" height="10"><use href="#ud"/></svg>
<div style="left:1381px;top:654px;width:515px;height:60px;box-sizing:border-box;background:#cfcfcf;border:1px solid #a0a0a0;border-radius:3px"></div>
<svg style="left:1392px;top:672px" width="26" height="26"><path d="M13 2C5 2 2 7 2 12 2 19 8 22 13 22L18 25 18 21C22 19 24 16 24 12 24 6 19 2 13 2Z" fill="#f4f4f4" stroke="#888"/><path d="M13 6V15M13 17V20" stroke="#555" stroke-width="2.400"/></svg>
<div class="t" style="left:1427px;top:655px;font-size:11.300px;color:#444;letter-spacing:.28px">Clip Count: 1</div>
<div class="t" style="left:1427px;top:668px;font-size:11.300px;color:#444;letter-spacing:.28px">Curves Pos: 0 Quat: 0 Euler: 0 Scale: 0 Muscles: 0 Generic: 6 PPtr: 0</div>
<div class="t" style="left:1427px;top:680px;font-size:11.300px;color:#444;letter-spacing:.28px">Curves Count: 6 Constant: 4 (66.7%) Dense: 0 (0.0%) Stream: 2 (33.3%)</div>
<div class="ln" style="top:726px"></div>
<svg style="left:1370px;top:734px" width="10" height="10"><use href="#td"/></svg>
<svg style="left:1386px;top:730px" width="14" height="18"><path d="M.5.5H9L13.500 5V17.500H.5Z" fill="#eee" stroke="#bbb"/><path d="M2 9H12V14H2Z" fill="#6a9edb"/></svg>
<div class="ck" style="left:1408px;top:731px"></div><svg style="left:1409px;top:729px" width="14" height="16"><path d="M2 9 6 14 12 2" fill="none" stroke="#111" stroke-width="2.400"/></svg>
<div class="t b" style="left:1425px;top:729px;color:#111;letter-spacing:.05px">Damage Anim (Script)</div>
<svg style="left:1836px;top:729px" width="16" height="18"><use href="#hp"/></svg><svg style="left:1861px;top:731px" width="13" height="14"><use href="#sl"/></svg><svg style="left:1881px;top:731px" width="17" height="14"><use href="#ge"/></svg>
<div class="t" style="left:1382px;top:746px;color:#808080">Script</div>
<div class="f" style="left:1582px;top:748px;width:291px;height:20px;padding-left:19px;line-height:14px;color:#808080;background:#c8c8c8;border-top-color:#a0a0a0">DamageAnim</div>
<svg style="left:1588px;top:751px" width="10" height="14" opacity=".5"><path d="M.5.5H7L9.500 3V13.500H.5Z" fill="#eee" stroke="#bbb"/><rect x="2" y="6" width="6" height="4" fill="#6a9edb"/></svg>
<svg style="left:1882px;top:751px;opacity:.5" width="11" height="11"><use href="#dt"/></svg>
<div class="t" style="left:1382px;top:768px;color:#222">Animator</div>
<div class="f" style="left:1582px;top:769px;width:291px;height:20px;padding-left:19px;line-height:16px">PopupDamage (Animator)</div>
<svg style="left:1587px;top:772px" width="12" height="14"><rect width="5" height="6" fill="#6a7a88"/><rect x="6" width="6" height="6" fill="#7a8a98"/><rect x="6" y="8" width="6" height="6" fill="#7a8a98"/><path d="M0 8 6 11 0 14Z" fill="#d11"/></svg>
<svg style="left:1882px;top:773px" width="11" height="11"><use href="#dt"/></svg>

<!-- inspector scrollbar -->
<div style="left:1901px;top:116px;width:19px;height:681px;background:#d2d2d2;box-sizing:border-box;border-left:1px solid #a8a8a8"></div>
<svg style="left:1905px;top:124px" width="11" height="8"><path d="M5.500 0 11 7H0Z" fill="#333"/></svg>
<svg style="left:1905px;top:783px" width="11" height="8"><path d="M0 0H11L5.500 7Z" fill="#333"/></svg>
<div class="tail" style="left:1902px;top:138px;width:17px;height:637px"></div>
<div class="thumb" style="left:1902px;top:151px;width:17px;height:530px"></div>

<!-- material -->
<div style="left:1363px;top:798px;width:557px;height:22px;background:linear-gradient(#4a4a4a,#6b6b6b 55%,#5a5a5a);border-top:1px solid #3a3a3a;border-bottom:1px solid #d8d8d8;box-sizing:border-box"></div>
<div style="left:1370px;top:799px;width:1px;height:20px;background:#3e3e3e"></div>
<div style="left:1535px;top:799px;width:1px;height:20px;background:#3e3e3e"></div>
<div class="t" style="left:1375px;top:798px;color:#fff;font-size:15px;letter-spacing:.3px;-webkit-text-stroke:.2px #fff">Default UI Material</div>
<svg style="left:1526px;top:804px" width="5" height="10"><path d="M2.500 0 5 4H0ZM2.500 10 5 6H0Z" fill="#bbb"/></svg>
<div style="left:1540px;top:806px;width:370px;height:1px;background:#c8c8c8"></div>
<div style="left:1540px;top:810px;width:370px;height:1px;background:#c8c8c8"></div>
<div style="left:1363px;top:820px;width:557px;height:184px;background:#323232;box-sizing:border-box;border-bottom:1px solid #8a8a8a"></div>
<div style="left:1575px;top:844px;width:133px;height:134px;background:#fff"></div>
</div></body></html>
